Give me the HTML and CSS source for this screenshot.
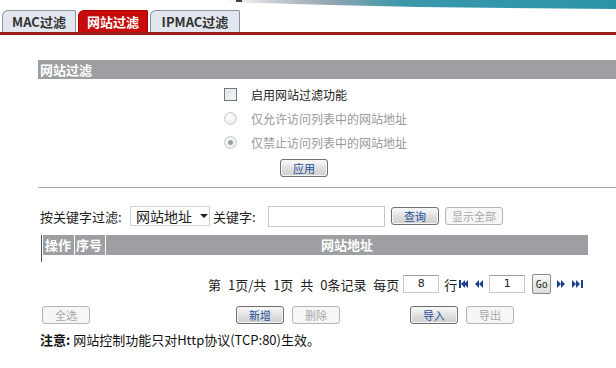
FILE: index.html
```html
<!DOCTYPE html>
<html lang="zh">
<head>
<meta charset="utf-8">
<title>网站过滤</title>
<link rel="stylesheet" href="styles.css">
</head>
<body>
<div class="banner">
  <svg width="616" height="10" viewBox="0 0 616 10">
    <defs>
      <linearGradient id="bg" x1="0" x2="1" y1="0" y2="0">
        <stop offset="0" stop-color="#ffffff"/>
        <stop offset="0.12" stop-color="#c9cdd2"/>
        <stop offset="0.28" stop-color="#8fa3b0"/>
        <stop offset="0.45" stop-color="#3a98ab"/>
        <stop offset="1" stop-color="#2b93a8"/>
      </linearGradient>
    </defs>
    <polygon points="225,0 616,0 616,9 420,7 330,5 260,3 225,2" fill="url(#bg)"/>
    <rect x="236" y="0" width="6" height="2" fill="#444"/>
  </svg>
</div>
<div class="tabs">
  <div class="tab t1">MAC过滤</div>
  <div class="tab t2 active">网站过滤</div>
  <div class="tab t3">IPMAC过滤</div>
</div>
<div class="content">
  <div class="section-title">网站过滤</div>
  <div class="options">
    <label class="opt"><span class="checkbox"></span><span>启用网站过滤功能</span></label>
    <label class="opt disabled"><span class="radio"></span><span>仅允许访问列表中的网站地址</span></label>
    <label class="opt disabled"><span class="radio checked"></span><span>仅禁止访问列表中的网站地址</span></label>
    <div class="apply-row"><button class="btn">应用</button></div>
  </div>
  <div class="divider"></div>
  <div class="filter">
    <span class="flabel">按关键字过滤:</span>
    <div class="select"><span>网站地址</span><span class="caret"></span></div>
    <span class="klabel">关键字:</span>
    <div class="textbox"></div>
    <button class="btn query">查询</button>
    <button class="btn dis showall">显示全部</button>
  </div>
  <div class="table">
    <div class="th c-op">操作</div>
    <div class="th c-no">序号</div>
    <div class="th c-url">网站地址</div>
  </div>
  <div class="pager">
    <span class="ptext">第 1页/共 1页 共 0条记录 每页</span>
    <div class="pbox rows">8</div>
    <span class="hang">行</span>
    <svg class="nav" width="26" height="10" viewBox="0 0 26 10">
      <rect x="0" y="1" width="2" height="8" fill="#1c3f8a"/>
      <polygon points="2,5 6,1 6,9" fill="#1c3f8a"/>
      <polygon points="5,5 9,1 9,9" fill="#1c3f8a"/>
      <polygon points="16,5 20,1 20,9" fill="#1c3f8a"/>
      <polygon points="20,5 24,1 24,9" fill="#1c3f8a"/>
    </svg>
    <div class="pbox page">1</div>
    <button class="go">Go</button>
    <svg class="nav next" width="28" height="10" viewBox="0 0 28 10">
      <polygon points="0,1 4,5 0,9" fill="#1c3f8a"/>
      <polygon points="4,1 8,5 4,9" fill="#1c3f8a"/>
      <polygon points="15,1 19,5 15,9" fill="#1c3f8a"/>
      <polygon points="19,1 23,5 19,9" fill="#1c3f8a"/>
      <rect x="24" y="1" width="2" height="8" fill="#1c3f8a"/>
    </svg>
  </div>
  <div class="actions">
    <button class="btn dis">全选</button>
    <button class="btn add">新增</button>
    <button class="btn dis">删除</button>
    <button class="btn imp">导入</button>
    <button class="btn dis">导出</button>
  </div>
  <div class="note"><b>注意:</b> 网站控制功能只对Http协议(TCP:80)生效。</div>
</div>
</body>
</html>
```
FILE: styles.css
```css
* { box-sizing: border-box; }
html, body { margin: 0; padding: 0; background: #fff; }
body {
  font-family: "Noto Sans CJK SC", "Noto Sans", sans-serif;
  font-size: 12px;
  color: #222;
  width: 616px;
  overflow: hidden;
}
.banner { height: 10px; line-height: 0; }
.banner svg { display: block; }

.tabs {
  display: flex;
  height: 25px;
  padding-left: 2px;
  border-bottom: 3px solid #9a1c1c;
}
.tab {
  height: 22px;
  margin-right: 2px;
  border: 1px solid #8c9099;
  border-bottom: none;
  border-radius: 6px 2px 0 0;
  background: #e2e7ef;
  color: #333;
  font-weight: bold;
  font-size: 13px;
  line-height: 21px;
  text-align: center;
}
.t1 { width: 74px; }
.t2 { width: 70px; }
.t3 { width: 90px; }
.tab.active {
  background: #c70c0c;
  border-color: #a00;
  color: #fff;
}

.content { padding-left: 38px; }
.section-title {
  margin-top: 25px;
  height: 19px;
  background: #9d9fa2;
  color: #fff;
  font-weight: bold;
  font-size: 13px;
  line-height: 19px;
  padding-left: 2px;
}
.options {
  display: flex;
  flex-direction: column;
  padding-left: 186px;
  padding-top: 3px;
}
.opt {
  display: flex;
  align-items: center;
  height: 24px;
  gap: 14px;
}
.opt.disabled { color: #999; }
.checkbox {
  width: 13px; height: 13px;
  border: 1px solid #6f7680;
  background: linear-gradient(135deg, #d9dce0, #fafafa);
  box-shadow: inset 0 0 0 1px #eef0f2;
}
.radio {
  width: 13px; height: 13px;
  border-radius: 50%;
  border: 1px solid #c4c7cb;
  background: radial-gradient(circle at 40% 40%, #fff, #e4e6e8);
  position: relative;
}
.radio.checked::after {
  content: "";
  position: absolute;
  left: 3px; top: 3px;
  width: 5px; height: 5px;
  border-radius: 50%;
  background: #9aa0a6;
}
.apply-row { padding-left: 56px; padding-top: 5px; }
.btn {
  height: 18px;
  width: 48px;
  padding: 0;
  border: 1px solid #707070;
  border-radius: 3px;
  background: linear-gradient(#fbfbfb, #dedede 55%, #d0d0d0);
  color: #1d4f9c;
  font-family: inherit;
  font-size: 11px;
  line-height: 16px;
  box-shadow: inset 0 0 0 1px #f4f4f4;
}
.btn.dis {
  border-color: #b5b5b5;
  background: #f6f6f6;
  color: #a8a8a8;
  box-shadow: none;
}
.divider {
  margin-top: 10px;
  height: 1px;
  border-top: 1px solid #a9a9a9;
}
.filter {
  display: flex;
  align-items: center;
  margin-top: 18px;
  padding-left: 2px;
  height: 20px;
  font-size: 13px;
}
.flabel { width: 90px; }
.select {
  width: 80px;
  height: 20px;
  border: 1px solid #d3d3d3;
  display: flex;
  align-items: center;
  padding-left: 5px;
  font-size: 14px;
}
.caret {
  margin-left: 8px;
  width: 0; height: 0;
  border-left: 4px solid transparent;
  border-right: 4px solid transparent;
  border-top: 4px solid #222;
}
.klabel { margin-left: 3px; width: 55px; }
.textbox {
  width: 117px;
  height: 21px;
  border: 1px solid #c9c9c9;
}
.query { margin-left: 6px; }
.showall { margin-left: 6px; width: 58px; }

.table {
  display: flex;
  margin-top: 9px;
  margin-left: 3px;
  width: 547px;
  height: 27px;
  border-left: 1px solid #555;
  align-items: flex-start;
}
.th {
  height: 20px;
  background: #9d9fa2;
  color: #fff;
  font-weight: bold;
  font-size: 13px;
  line-height: 20px;
}
.c-op { width: 32px; padding-left: 2px; border-right: 1px solid #fff; margin-left: 1px; }
.c-no { width: 31px; padding-left: 1px; border-right: 1px solid #fff; }
.c-url { flex: 1; text-align: center; }

.pager {
  display: flex;
  align-items: center;
  margin-top: 12px;
  padding-left: 170px;
  height: 20px;
  font-size: 13px;
}
.ptext { word-spacing: 4px; }
.pbox {
  width: 36px;
  height: 18px;
  border: 1px solid #c9c9c9;
  border-top-color: #999;
  text-align: center;
  line-height: 16px;
  font-family: "DejaVu Sans", sans-serif;
  font-size: 11px;
}
.rows { margin-left: 4px; }
.hang { margin-left: 5px; }
.nav { display: block; margin-left: 2px; }
.page { margin-left: 4px; }
.go {
  margin-left: 7px;
  width: 19px;
  height: 20px;
  padding: 0;
  border: 1px solid #8a8a8a;
  border-radius: 2px;
  background: linear-gradient(#f8f8f8, #dcdcdc);
  font-family: "DejaVu Sans Mono", monospace;
  font-size: 10px;
  color: #222;
}
.nav.next { margin-left: 6px; }

.actions {
  display: flex;
  align-items: center;
  margin-top: 12px;
  padding-left: 4px;
}
.actions .add { margin-left: 146px; }
.actions .add + .dis { margin-left: 8px; }
.actions .imp { margin-left: 70px; }
.actions .imp + .dis { margin-left: 8px; }

.note {
  margin-top: 6px;
  padding-left: 2px;
  font-size: 13px;
  color: #111;
}
.note b { font-weight: bold; }
```
